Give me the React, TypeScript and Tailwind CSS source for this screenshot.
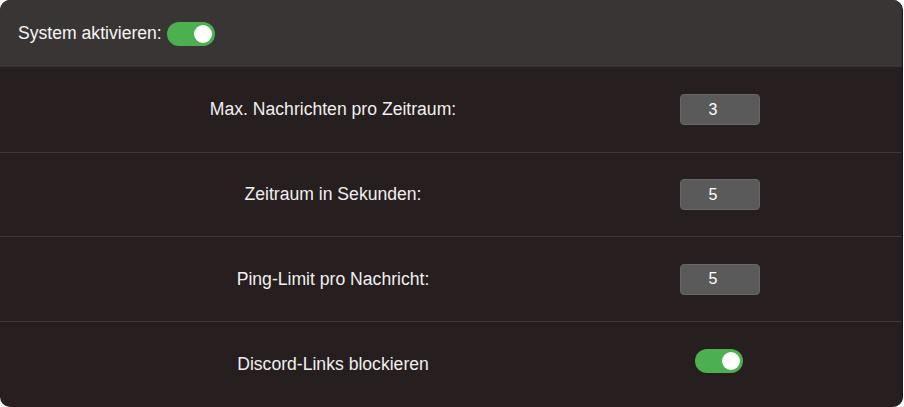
import React, { useState } from 'react';

interface ToggleProps {
  on: boolean;
  onChange: (v: boolean) => void;
}

const Toggle: React.FC<ToggleProps> = ({ on, onChange }) => (
  <button
    onClick={() => onChange(!on)}
    className={`relative w-[48px] h-[24px] rounded-full transition-colors ${on ? 'bg-[#4caf50]' : 'bg-[#777]'}`}
  >
    <span
      className={`absolute top-[3px] w-[18px] h-[18px] rounded-full bg-white transition-all ${on ? 'left-[27px]' : 'left-[3px]'}`}
    />
  </button>
);

const NumberRow: React.FC<{ label: string; value: string; className: string }> = ({ label, value, className }) => (
  <div className={`flex items-center ${className}`}>
    <div className="w-[666px] text-center text-[17.6px] text-[#f0f0f0]">{label}</div>
    <div className="ml-[14px]">
      <input
        defaultValue={value}
        className="w-[80px] h-[31px] rounded-[4px] bg-[#5a5a5a] border border-[#676767] text-[16px] text-white text-center pr-[14px] outline-none"
      />
    </div>
  </div>
);

export default function App() {
  const [system, setSystem] = useState(true);
  const [links, setLinks] = useState(true);

  return (
    <div className="w-[903px] h-[407px] rounded-[10px] overflow-hidden bg-[#261e1f] border-r border-[#1c1617] font-['Liberation_Sans',Arial,sans-serif]">
      {/* Header */}
      <div className="h-[67px] bg-[#3a3535] flex items-center px-[18px] gap-[5px]">
        <span className="text-[17.6px] text-[#f5f5f5]">System aktivieren:</span>
        <Toggle on={system} onChange={setSystem} />
      </div>

      <NumberRow label="Max. Nachrichten pro Zeitraum:" value="3" className="h-[85px]" />
      <NumberRow label="Zeitraum in Sekunden:" value="5" className="h-[84px] border-t border-[#3e3838]" />
      <NumberRow label="Ping-Limit pro Nachricht:" value="5" className="h-[85px] border-t border-[#3e3838]" />

      <div className="flex items-center h-[86px] border-t border-[#3e3838]">
        <div className="w-[666px] text-center text-[17.6px] text-[#f0f0f0]">Discord-Links blockieren</div>
        <div className="ml-[29px]">
          <Toggle on={links} onChange={setLinks} />
        </div>
      </div>
    </div>
  );
}
